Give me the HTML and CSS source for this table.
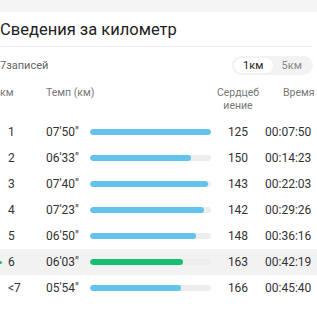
FILE: index.html
```html
<!DOCTYPE html>
<html lang="ru">
<head>
<meta charset="utf-8">
<link rel="stylesheet" href="styles.css">
</head>
<body>
<div class="topband"></div>
<h2 class="title">Сведения за километр</h2>
<div class="sep"></div>
<div class="meta">
  <span class="count">7записей</span>
  <div class="toggle">
    <span class="opt active">1км</span>
    <span class="opt">5км</span>
  </div>
</div>
<div class="table">
  <div class="row head">
    <span class="c-num">км</span>
    <span class="c-pace">Темп (км)</span>
    <span class="c-bar"></span>
    <span class="c-hr">Сердцеб<br>иение</span>
    <span class="c-time">Время</span>
  </div>
  <div class="row">
    <span class="c-num">1</span><span class="c-pace">07'50"</span>
    <span class="c-bar"><span class="track"><span class="fill" style="width:100%"></span></span></span>
    <span class="c-hr">125</span><span class="c-time">00:07:50</span>
  </div>
  <div class="row">
    <span class="c-num">2</span><span class="c-pace">06'33"</span>
    <span class="c-bar"><span class="track"><span class="fill" style="width:83.6%"></span></span></span>
    <span class="c-hr">150</span><span class="c-time">00:14:23</span>
  </div>
  <div class="row">
    <span class="c-num">3</span><span class="c-pace">07'40"</span>
    <span class="c-bar"><span class="track"><span class="fill" style="width:97.9%"></span></span></span>
    <span class="c-hr">143</span><span class="c-time">00:22:03</span>
  </div>
  <div class="row">
    <span class="c-num">4</span><span class="c-pace">07'23"</span>
    <span class="c-bar"><span class="track"><span class="fill" style="width:94.3%"></span></span></span>
    <span class="c-hr">142</span><span class="c-time">00:29:26</span>
  </div>
  <div class="row">
    <span class="c-num">5</span><span class="c-pace">06'50"</span>
    <span class="c-bar"><span class="track"><span class="fill" style="width:87.2%"></span></span></span>
    <span class="c-hr">148</span><span class="c-time">00:36:16</span>
  </div>
  <div class="row best">
    <span class="c-num">6</span><span class="c-pace">06'03"</span>
    <span class="c-bar"><span class="track"><span class="fill" style="width:77.2%"></span></span></span>
    <span class="c-hr">163</span><span class="c-time">00:42:19</span>
  </div>
  <div class="row">
    <span class="c-num">&lt;7</span><span class="c-pace">05'54"</span>
    <span class="c-bar"><span class="track"><span class="fill" style="width:75.3%"></span></span></span>
    <span class="c-hr">166</span><span class="c-time">00:45:40</span>
  </div>
</div>
</body>
</html>
```
FILE: styles.css
```css
* { box-sizing: border-box; margin: 0; padding: 0; }
html, body { background: #fff; }
body {
  font-family: Roboto, "Noto Sans", sans-serif;
  color: #333;
  width: 317px;
  overflow: hidden;
}
.topband { height: 12px; background: #f5f5f5; }
.title {
  font-weight: 400;
  font-size: 16.5px;
  color: #222;
  line-height: 20px;
  padding: 8px 0 6px 0;
}
.sep { height: 1px; background: #eeeeee; margin-right: 4px; }
.meta {
  display: flex;
  justify-content: space-between;
  align-items: center;
  padding: 9px 4px 0 0;
}
.count { font-size: 11px; color: #666; }
.toggle {
  display: flex;
  background: #f2f2f2;
  border-radius: 10px;
  padding: 2px;
  width: 81px;
}
.opt {
  flex: 1;
  text-align: center;
  font-size: 11px;
  line-height: 15px;
  color: #888;
  border-radius: 8px;
}
.opt.active { background: #fff; color: #222; }
.table { margin-top: 8px; }
.row {
  display: grid;
  grid-template-columns: 46px 44px 121px 54px 52px;
  align-items: center;
  height: 26px;
  font-size: 12px;
  color: #333;
  position: relative;
  white-space: nowrap;
}
.row .c-num { padding-left: 8px; }
.row.head {
  height: 36px;
  align-items: start;
  font-size: 10.5px;
  color: #777;
  line-height: 13px;
  padding-top: 3px;
}
.row.head .c-num { padding-left: 0; }
.row.head .c-time { padding-left: 18px; }
.c-hr { text-align: center; }
.track {
  display: block;
  height: 6px;
  border-radius: 3px;
  background: #ededed;
  overflow: hidden;
}
.fill {
  display: block;
  height: 100%;
  border-radius: 3px;
  background: #62c4ea;
}
.row.best { background: #f2f2f2; }
.row.best .fill { background: #17bf72; }
.row.best::before {
  content: "";
  position: absolute;
  left: -1px;
  top: 12px;
  width: 3px;
  height: 3px;
  border-radius: 50%;
  background: #17bf72;
}
```
